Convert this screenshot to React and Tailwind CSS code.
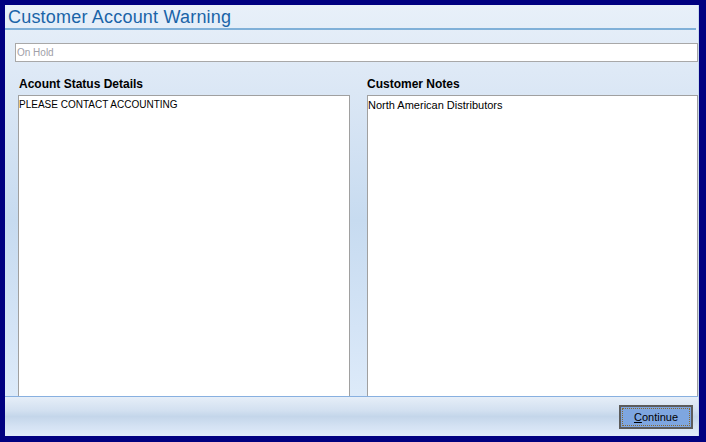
import React from 'react';

const font = { fontFamily: 'Tahoma, "DejaVu Sans", "Liberation Sans", sans-serif' };

export default function App() {
  return (
    <div className="w-[706px] h-[442px] bg-[#000080] pt-[5px] pl-[5px] pr-[7px] pb-[6px]" style={font}>
      <div className="w-full h-full flex flex-col border-r border-[#c8d8ec] bg-[linear-gradient(to_bottom,#e8f0f9_0%,#dbe7f5_20%,#c7dbf0_50%,#d4e4f6_75%,#e2eefb_100%)]">
        {/* Title */}
        <div className="h-[25px] flex items-end pl-[3px] border-b-2 border-[#80b0d8] mr-[2px]">
          <span className="text-[18px] tracking-[0.2px] leading-[22px] text-[#1a64a8] font-['Liberation_Sans',sans-serif]">Customer Account Warning</span>
        </div>

        {/* Status field */}
        <div className="pl-[10px] pr-0 mt-[13px]">
          <div className="h-[19px] bg-white border border-[#a8a8a8] pl-[1px] flex items-center">
            <span className="text-[10px] text-[#a0a0a8] font-['Liberation_Sans',sans-serif]">On Hold</span>
          </div>
        </div>

        {/* Panels */}
        <div className="flex-1 flex pl-[13px] mt-[15px] gap-[17px]">
          <div className="w-[332px] flex flex-col">
            <div className="h-[18px] pl-[1px] text-[12px] leading-[15px] font-bold text-black font-['Liberation_Sans',sans-serif]">Acount Status Details</div>
            <div className="flex-1 bg-white border border-[#a0a0a0] border-b-0 px-[0px] pt-[2px] text-[10px] leading-[14px] text-black font-['Liberation_Sans',sans-serif]">
              PLEASE CONTACT ACCOUNTING
            </div>
          </div>
          <div className="flex-1 flex flex-col">
            <div className="h-[18px] pl-[0px] text-[12px] leading-[15px] font-bold text-black font-['Liberation_Sans',sans-serif]">Customer Notes</div>
            <div className="flex-1 bg-white border border-[#a0a0a0] border-b-0 px-[0px] pt-[2px] text-[11px] leading-[14px] text-black font-['Liberation_Sans',sans-serif]">
              North American Distributors
            </div>
          </div>
        </div>

        {/* Footer */}
        <div className="h-[40px] border-t border-[#88b0e0] bg-[linear-gradient(to_bottom,#e6eef8_0%,#d2e0f0_35%,#c4d6ea_50%,#d4e2f3_75%,#e0ebf9_100%)] flex items-center justify-end pr-[5px]">
          <button className="w-[74px] h-[24px] bg-[#7ea6e0] border-2 border-[#5c5c5c] p-[1px] mt-[1px]">
            <div className="w-full h-full border border-dotted border-[#8a6a30] flex items-center justify-center text-[11px] text-black font-['Liberation_Sans',sans-serif]">
              <span><span className="underline">C</span>ontinue</span>
            </div>
          </button>
        </div>
      </div>
    </div>
  );
}
